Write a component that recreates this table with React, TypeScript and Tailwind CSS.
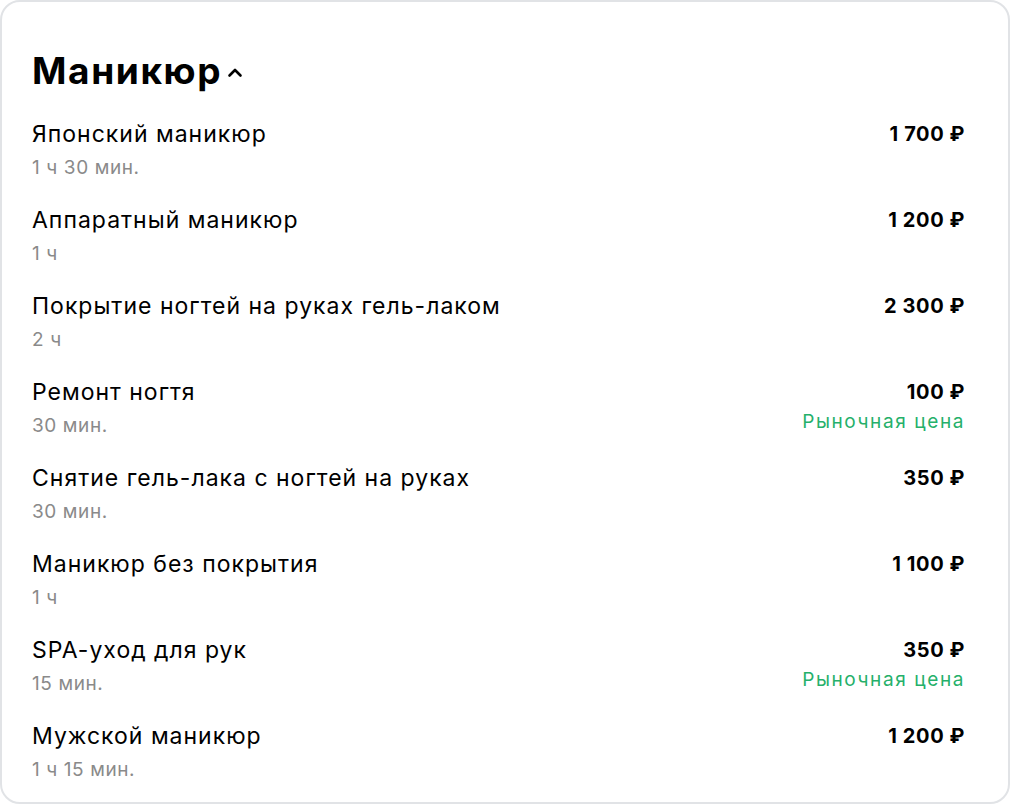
import React from "react";

type Service = {
  name: string;
  duration: string;
  price: string;
  market?: boolean;
};

const services: Service[] = [
  { name: "Японский маникюр", duration: "1 ч 30 мин.", price: "1 700 ₽" },
  { name: "Аппаратный маникюр", duration: "1 ч", price: "1 200 ₽" },
  { name: "Покрытие ногтей на руках гель-лаком", duration: "2 ч", price: "2 300 ₽" },
  { name: "Ремонт ногтя", duration: "30 мин.", price: "100 ₽", market: true },
  { name: "Снятие гель-лака с ногтей на руках", duration: "30 мин.", price: "350 ₽" },
  { name: "Маникюр без покрытия", duration: "1 ч", price: "1 100 ₽" },
  { name: "SPA-уход для рук", duration: "15 мин.", price: "350 ₽", market: true },
  { name: "Мужской маникюр", duration: "1 ч 15 мин.", price: "1 200 ₽" },
];

const App = () => {
  return (
    <div className="w-[1010px] h-[804px] bg-white font-['Inter',sans-serif] text-[#000]">
      <div className="h-full rounded-[20px] border-2 border-[#e1e3e6] pl-[30px] pr-[43px] pt-[47px]">
        {/* header */}
        <div className="flex items-center">
          <h2 className="text-[37px] leading-[44px] font-bold tracking-[1.6px]">Маникюр</h2>
          <svg width="16" height="16" viewBox="0 0 16 16" className="ml-[5px] mt-[3px]">
            <path d="M2.5 10.5 L8 5 L13.5 10.5" fill="none" stroke="#000" strokeWidth="2.6" strokeLinecap="round" strokeLinejoin="round" />
          </svg>
        </div>

        <div className="mt-[27px] flex flex-col gap-[26px]">
          {services.map((s, i) => (
            <div key={i} className="flex justify-between">
              <div>
                <div className="text-[23px] leading-[29px] tracking-[1px]">{s.name}</div>
                <div className="mt-[7px] text-[19px] leading-[24px] text-[#8a8a8a] tracking-[0.6px]">{s.duration}</div>
              </div>
              <div className="flex flex-col items-end">
                <div className="text-[20px] leading-[29px] font-bold tracking-[0.6px]">{s.price}</div>
                {s.market && (
                  <div className="mt-[3px] text-[19px] leading-[24px] text-[#25b06a] tracking-[1.6px]">Рыночная цена</div>
                )}
              </div>
            </div>
          ))}
        </div>
      </div>
    </div>
  );
};

export default App;
